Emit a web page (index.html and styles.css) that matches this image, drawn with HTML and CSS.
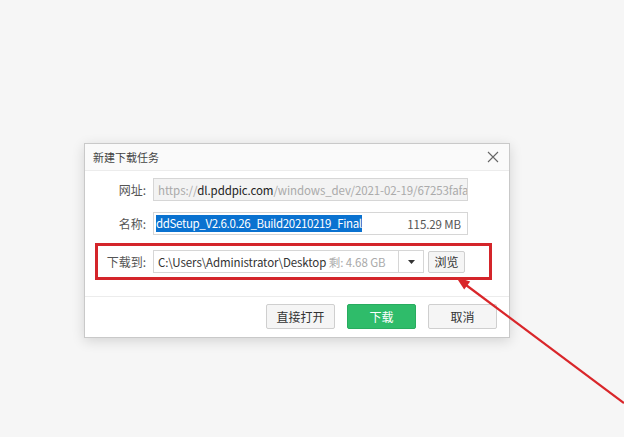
FILE: index.html
```html
<!DOCTYPE html>
<html lang="zh-CN">
<head>
	<meta charset="UTF-8">
	<title>新建下载任务</title>
	<link rel="stylesheet" href="styles.css">
</head>
<body>
	<div class="dialog">
		<div class="title-bar">
			<span class="title">新建下载任务</span>
			<span class="close">
				<svg width="12" height="12" viewBox="0 0 12 12"><path d="M1 1L11 11M11 1L1 11" stroke="#666" stroke-width="1.1" fill="none"/></svg>
			</span>
		</div>
		<div class="form">
			<div class="row">
				<span class="label">网址:</span>
				<div class="field url"><span class="dim">https://</span>dl.pddpic.com<span class="dim">/windows_dev/2021-02-19/67253fafa</span></div>
			</div>
			<div class="row">
				<span class="label">名称:</span>
				<div class="field name"><span class="sel">ddSetup_V2.6.0.26_Build20210219_Final</span><span class="size">115.29 MB</span></div>
			</div>
			<div class="row save-row">
				<span class="label">下载到:</span>
				<div class="field path">
					<span class="path-text">C:\Users\Administrator\Desktop <span class="dim">剩: 4.68 GB</span></span>
					<span class="drop"><svg width="7" height="4" viewBox="0 0 7 4"><path d="M0 0H7L3.5 4Z" fill="#333"/></svg></span>
				</div>
				<button class="btn browse">浏览</button>
			</div>
		</div>
		<div class="footer">
			<button class="btn">直接打开</button>
			<button class="btn primary">下载</button>
			<button class="btn">取消</button>
		</div>
	</div>

	<svg class="arrow" width="624" height="437" viewBox="0 0 624 437">
		<path d="M466 285L624 403" stroke="#d9262a" stroke-width="2.2" fill="none"/>
		<path d="M456 277L464.2 289.4L470.2 281.4Z" fill="#d9262a"/>
	</svg>
</body>
</html>
```

FILE: styles.css
```css
body {
	margin: 0;
	padding: 0;
	background-color: #f6f6f6;
	font-family: "Noto Sans CJK SC", "Noto Sans", sans-serif;
	font-size: 12px;
	color: #333;
	height: 437px;
	overflow: hidden;
}

.dialog {
	margin: 143px 0 0 84px;
	width: 426px;
	height: 195px;
	box-sizing: border-box;
	background-color: #fff;
	border: 1px solid #c9c9c9;
	box-shadow: 0 3px 12px rgba(0, 0, 0, 0.14);
	display: flex;
	flex-direction: column;
}

.title-bar {
	height: 26px;
	display: flex;
	align-items: center;
	justify-content: space-between;
	padding: 0 10px 0 8px;
	background-color: #fafafa;
	border-bottom: 1px solid #ececec;
}

.title {
	color: #444;
	font-size: 11px;
}

.close {
	display: flex;
}

.form {
	padding: 7px 0 0 11px;
	display: flex;
	flex-direction: column;
	gap: 11px;
	flex: 1;
}

.row {
	display: flex;
	align-items: center;
	height: 23px;
}

.label {
	width: 50px;
	text-align: right;
	color: #555;
	padding-right: 7px;
}

.field {
	box-sizing: border-box;
	width: 315px;
	height: 23px;
	border: 1px solid #d6d6d6;
	display: flex;
	align-items: center;
	padding: 0 3px 0 4px;
	white-space: nowrap;
	overflow: hidden;
	font-size: 11.5px;
	letter-spacing: -0.1px;
}

.url {
	background-color: #f3f3f3;
	color: #222;
}

.dim {
	color: #aaa;
}

.name {
	justify-content: space-between;
	padding-left: 2px;
	padding-right: 6px;
}

.sel {
	background-color: #0a72d0;
	color: #fff;
	line-height: 17px;
	letter-spacing: -0.35px;
}

.size {
	color: #555;
}

.save-row {
	box-sizing: border-box;
	width: 397px;
	height: 37px;
	margin: -3px 0 0 -1px;
	border: 3px solid #d4252a;
}

.save-row .label {
	width: 48px;
}

.path {
	width: 271px;
	padding-right: 0;
	justify-content: space-between;
}

.path-text {
	color: #333;
}

.drop {
	width: 24px;
	height: 21px;
	border-left: 1px solid #d6d6d6;
	display: flex;
	align-items: center;
	justify-content: center;
}

.btn {
	font-family: inherit;
	font-size: 12px;
	color: #333;
	background-color: #f5f5f5;
	border: 1px solid #cfcfcf;
	border-radius: 2px;
	cursor: pointer;
}

.browse {
	margin-left: 4px;
	width: 37px;
	height: 22px;
	padding: 0;
}

.footer {
	border-top: 1px solid #ececec;
	height: 38px;
	display: flex;
	align-items: center;
	justify-content: flex-end;
	gap: 12px;
	padding: 0 12px 2px 0;
}

.footer .btn {
	width: 69px;
	height: 25px;
}

.footer .primary {
	background-color: #2fbc6a;
	border-color: #28ac5f;
	color: #fff;
}

.arrow {
	position: absolute;
	left: 0;
	top: 0;
	pointer-events: none;
}
```
